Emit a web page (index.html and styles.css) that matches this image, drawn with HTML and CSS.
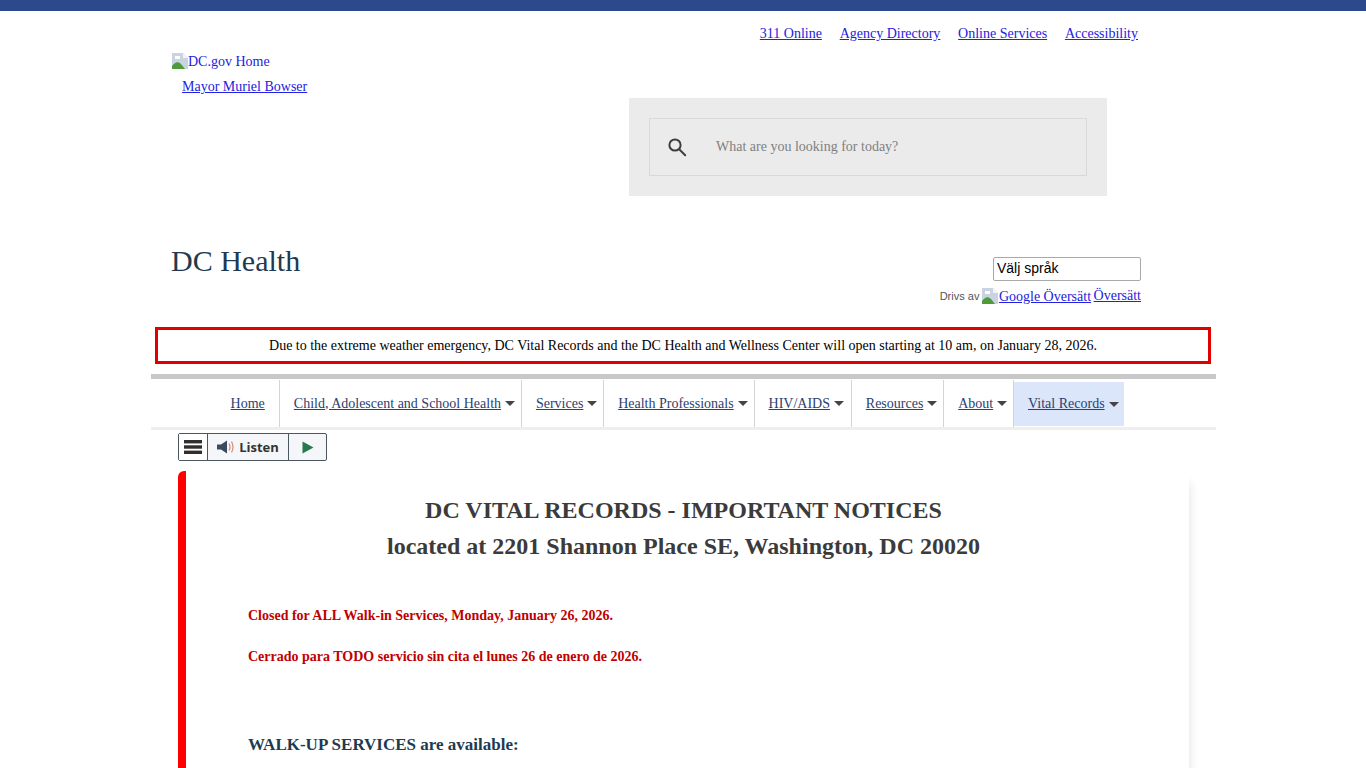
FILE: index.html
```html
<!DOCTYPE html>
<html lang="en">

<head>
  <meta charset="UTF-8">
  <title>DC Health</title>
  <link rel="stylesheet" href="styles.css">
</head>

<body>
  <div class="topbar"></div>
  <div class="wrap">
    <ul class="toplinks">
      <li><a href="#">311 Online</a></li>
      <li><a href="#">Agency Directory</a></li>
      <li><a href="#">Online Services</a></li>
      <li><a href="#">Accessibility</a></li>
    </ul>

    <div class="logo">
      <a href="#" class="home">
        <svg class="broken" width="16" height="16" viewBox="0 0 16 16">
          <path d="M0 0h11l5 5v11H0z" fill="#c9d3e2" />
          <path d="M11 0v5h5z" fill="#f4f4f4" />
          <path d="M3 3h5v3H3z" fill="#fff" />
          <path d="M0 16v-3c3-4 6-5 9-2l4 5z" fill="#4f9a3a" />
        </svg>DC.gov Home</a>
      <a href="#" class="mayor">Mayor Muriel Bowser</a>
    </div>

    <div class="search">
      <div class="search-inner">
        <svg width="20" height="20" viewBox="0 0 20 20" fill="none" stroke="#3d3d3d" stroke-width="2">
          <circle cx="8" cy="8" r="5.6" />
          <path d="M12.2 12.2l6 6" stroke-linecap="round" />
        </svg>
        <span class="placeholder">What are you looking for today?</span>
      </div>
    </div>

    <div class="title-row">
      <h1>DC Health</h1>
      <div class="translate">
        <div class="lang-select">Välj språk</div>
        <div class="powered">
          <span class="drivs">Drivs av</span>
          <a href="#" class="gt"><svg class="broken" width="16" height="16" viewBox="0 0 16 16">
              <path d="M0 0h11l5 5v11H0z" fill="#c9d3e2" />
              <path d="M11 0v5h5z" fill="#f4f4f4" />
              <path d="M3 3h5v3H3z" fill="#fff" />
              <path d="M0 16v-3c3-4 6-5 9-2l4 5z" fill="#4f9a3a" />
            </svg>Google Översätt</a>
          <a href="#" class="gt-short">Översätt</a>
        </div>
      </div>
    </div>

    <div class="alert">Due to the extreme weather emergency, DC Vital Records and the DC Health and Wellness Center will open starting at 10 am, on January 28, 2026.</div>

    <ul class="nav">
      <li><a href="#">Home</a></li>
      <li class="has-sub"><a href="#">Child, Adolescent and School Health</a></li>
      <li class="has-sub"><a href="#">Services</a></li>
      <li class="has-sub"><a href="#">Health Professionals</a></li>
      <li class="has-sub hiv"><a href="#">HIV/AIDS</a></li>
      <li class="has-sub"><a href="#">Resources</a></li>
      <li class="has-sub"><a href="#">About</a></li>
      <li class="has-sub active"><a href="#">Vital Records</a></li>
    </ul>

    <div class="listen">
      <div class="listen-menu">
        <svg width="18" height="14" viewBox="0 0 18 14" fill="#2f2f2f">
          <rect width="18" height="3.4" />
          <rect y="5.3" width="18" height="3.4" />
          <rect y="10.6" width="18" height="3.4" />
        </svg>
      </div>
      <div class="listen-btn">
        <svg width="18" height="14" viewBox="0 0 18 14" fill="none">
          <path d="M0 4.5h4L10 0.500v13L4 9.500H0z" fill="#3c4a60" />
          <path d="M12 3.500q2 3.500 0 7M14.500 1.500q3 5.500 0 11" stroke="#d98a78" stroke-width="1.200" />
        </svg>
        Listen
      </div>
      <div class="listen-play">
        <svg width="12" height="13" viewBox="0 0 12 13">
          <path d="M0.500 0.500L11.500 6.500L0.500 12.500z" fill="#26794f" />
        </svg>
      </div>
    </div>

    <div class="card">
      <h2>DC VITAL RECORDS - IMPORTANT NOTICES<br>located at 2201 Shannon Place SE, Washington, DC 20020</h2>
      <p class="closed">Closed for ALL Walk-in Services, Monday, January 26, 2026.</p>
      <p class="closed">Cerrado para TODO servicio sin cita el lunes 26 de enero de 2026.</p>
      <h3>WALK-UP SERVICES are available:</h3>
    </div>
  </div>
</body>

</html>
```

FILE: styles.css
```css
* {
  box-sizing: border-box;
  padding: 0px;
  margin: 0px;
}

html {
  overflow: hidden;
}

body {
  font-family: "Liberation Serif", serif;
  font-size: 14px;
  color: #333;
  background: #fff;
}

ul {
  list-style: none;
}

a {
  color: #2222e0;
}

.topbar {
  height: 11px;
  background-color: #2c4a8b;
}

.wrap {
  width: 1066px;
  margin-left: 150px;
}

.toplinks {
  display: flex;
  justify-content: flex-end;
  gap: 17.75px;
  padding: 15px 78px 0 0;
  line-height: 16px;
}

/* logo block */
.logo {
  padding: 11px 0 0 22px;
  height: 56px;
}

.logo a {
  display: block;
  line-height: 16px;
}

.home {
  display: block;
  text-decoration: none;
}

.broken {
  vertical-align: -3px;
}

.mayor {
  margin: 9px 0 0 10px;
}

/* search box */
.search {
  width: 478px;
  height: 98px;
  margin-left: 479px;
  padding: 20px;
  background-color: #ebebeb;
}

.search-inner {
  display: flex;
  align-items: center;
  height: 58px;
  padding-left: 17px;
  border: 1px solid #d9d9d9;
}

.placeholder {
  margin-left: 29px;
  color: #808080;
}

.title-row {
  display: flex;
  justify-content: space-between;
  height: 131px;
  padding: 46px 75px 0 21px;
}

h1 {
  font-size: 30px;
  font-weight: 400;
  line-height: 38px;
  color: #1e3a50;
}

.translate {
  display: flex;
  flex-direction: column;
  align-items: flex-end;
  padding-top: 15px;
}

.lang-select {
  width: 148px;
  height: 24px;
  padding-left: 3px;
  border: 1px solid #a9a9a9;
  border-radius: 2px;
  font-family: "Liberation Sans", sans-serif;
  font-size: 14px;
  line-height: 20px;
  color: #000;
}

.powered {
  margin-top: 5px;
  line-height: 20px;
  white-space: nowrap;
}

.powered .broken {
  margin: 0 1px 0 -1px;
}

.gt {
  vertical-align: -1px;
}

.gt-short {
  margin-left: -1px;
}

.drivs {
  font-family: "Liberation Sans", sans-serif;
  font-size: 11px;
  color: #555;
}

.alert {
  width: 1056px;
  height: 37px;
  margin-left: 5px;
  border: 3px solid #e00000;
  font-size: 14px;
  line-height: 31px;
  text-align: center;
  color: #000;
}

/* main menu */
.nav {
  display: flex;
  height: 56px;
  margin: 10px 0 0 1px;
  padding-left: 65.6px;
  border-top: 5px solid #c8c8c8;
  border-bottom: 3px solid #eeeeee;
}

.nav li {
  display: flex;
  align-items: center;
  padding: 0 14px;
  border-right: 1px solid #d4d4d4;
  margin-top: 1px;
}

.nav a {
  color: #2b4170;
}

.has-sub.has-sub {
  padding-right: 5.85px;
}

.has-sub.hiv {
  padding-right: 6.85px;
}

.has-sub::after {
  content: "";
  width: 0;
  height: 0;
  margin-left: 4px;
  border-left: 5px solid transparent;
  border-right: 5px solid transparent;
  border-top: 5px solid #444;
}

.nav .active.active {
  height: 44px;
  margin-top: 3px;
  padding-right: 5px;
  border-right: none;
  background-color: #dbe6fa;
}

/* listen button */
.listen {
  display: flex;
  width: 149px;
  height: 28px;
  margin: 3px 0 0 28px;
  border: 1px solid #4c5663;
  background-color: #f4f6f9;
  border-radius: 2px;
  font-family: "Open Sans", sans-serif;
  font-size: 13px;
  font-weight: 700;
  color: #333;
}

.listen>div {
  display: flex;
  align-items: center;
  justify-content: center;
}

.listen-menu {
  width: 29px;
  border-right: 1px solid #4c5663;
  background: #fff;
}

.listen-btn {
  width: 81px;
  gap: 4px;
  border-right: 1px solid #4c5663;
}

.listen-play {
  flex: 1;
}

/* notices */
.card {
  width: 1011px;
  min-height: 500px;
  margin: 10px 0 0 28px;
  padding: 21px 70px 0 62px;
  border-left: 8px solid #ff0000;
  border-radius: 6px 0 0 6px;
  box-shadow: 4px 10px 10px -2px rgba(0, 0, 0, .09);
}

h2 {
  font-size: 24px;
  line-height: 36px;
  text-align: center;
  color: #3b3b3b;
}

.closed {
  margin-top: 25px;
  font-weight: 700;
  line-height: 16px;
  color: #c00000;
}

h2+.closed {
  margin-top: 44px;
}

h3 {
  margin-top: 69px;
  font-size: 17px;
  line-height: 22px;
  color: #1e3a50;
}
```
